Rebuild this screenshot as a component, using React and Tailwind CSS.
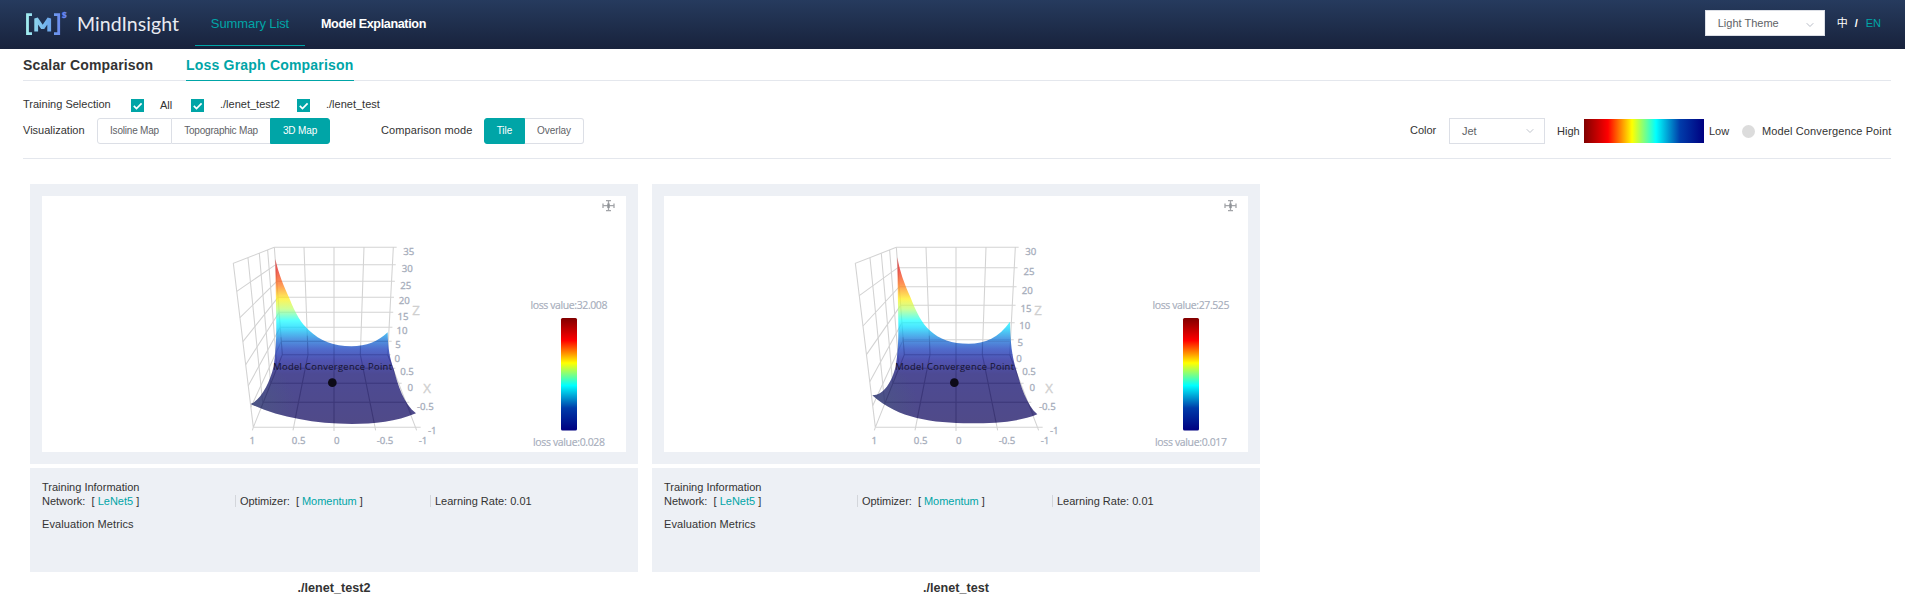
import React from "react";
import { ChevronDown } from "lucide-react";

const JET_STOPS = [
  ["0", "#800000"], ["0.2", "#ff0000"], ["0.4", "#ffff00"],
  ["0.6", "#00ffff"], ["0.8", "#003caa"], ["1", "#000080"],
];

const LEFT_WALL_7 = [187, 266, 338, 407, 470, 535];
const LEFT_WALL_6 = [200, 291, 377, 458, 530];

const RUNS = [
  {
    id: "a",
    name: "./lenet_test2",
    max: "32.008",
    min: "0.028",
    levels: [107, 157, 205, 250, 295, 337],
    outer: LEFT_WALL_7,
    zLabels: [["35", 566, 77], ["30", 562, 129], ["25", 557, 179], ["20", 553, 226], ["15", 549, 272], ["10", 546, 315], ["5", 534, 358], ["0", 532, 400]],
    surface:
      "M166 90 C176 136 192 172 208 208 C226 254 244 284 266 303 C300 336 342 352 394 352 C440 352 474 338 503 310 C504 360 510 390 521 420 C533 468 552 525 588 553 C530 578 462 585 396 585 C280 584 174 564 92 525 C124 512 150 460 161 412 C171 350 169 280 168 230 Z",
  },
  {
    id: "b",
    name: "./lenet_test",
    max: "27.525",
    min: "0.017",
    levels: [116, 173, 229, 281, 332],
    outer: LEFT_WALL_6,
    zLabels: [["30", 566, 77], ["25", 561, 137], ["20", 556, 194], ["15", 552, 250], ["10", 548, 301], ["5", 535, 351], ["0", 531, 400]],
    surface:
      "M166 85 C174 130 188 166 204 202 C224 252 240 284 262 303 C292 332 330 344 380 344 C430 344 470 326 504 278 C505 340 510 380 522 420 C536 470 554 528 586 556 C530 579 462 583 386 583 C270 582 170 570 91 499 C124 500 150 460 161 412 C172 350 169 280 168 230 Z",
  },
];

function Label({ x, y, children, size = 29, fill = "#a6adbb", length, bold = 0.9 }) {
  return (
    <text
      x={x}
      y={y}
      textAnchor="middle"
      fontSize={size}
      fill={fill}
      stroke={fill}
      strokeWidth={bold}
      textLength={length}
      fontFamily="'Open Sans', 'Noto Sans', sans-serif"
    >
      {children}
    </text>
  );
}

function SurfacePlot({ run }) {
  const edgeLeft = (y) => 163 + ((y - 55) / 322) * 24;
  const edgeRight = (y) => 520 - ((y - 55) / 322) * 17;
  const outerX = (y) => 40 + ((y - 103) / 492) * 60;
  return (
    <svg className="block h-[256px] w-[584px]" viewBox="42 197 584 256">
      <defs>
        <linearGradient id={`surf-${run.id}`} gradientUnits="userSpaceOnUse" x1="0" y1="85" x2="0" y2="585">
          <stop offset="0" stopColor="#d22020" />
          <stop offset="0.08" stopColor="#e81c10" />
          <stop offset="0.16" stopColor="#ff6810" />
          <stop offset="0.25" stopColor="#ffef10" />
          <stop offset="0.31" stopColor="#b8ff70" />
          <stop offset="0.38" stopColor="#10ffff" />
          <stop offset="0.42" stopColor="#00d8ff" />
          <stop offset="0.49" stopColor="#0870d8" />
          <stop offset="0.55" stopColor="#0830b8" />
          <stop offset="0.62" stopColor="#080c90" />
          <stop offset="0.7" stopColor="#040068" />
          <stop offset="1" stopColor="#080058" />
        </linearGradient>
        <radialGradient id={`corner-${run.id}`} gradientUnits="userSpaceOnUse" cx="95" cy="520" r="130">
          <stop offset="0" stopColor="#486878" stopOpacity="0.75" />
          <stop offset="1" stopColor="#486878" stopOpacity="0" />
        </radialGradient>
        <linearGradient id={`bar-${run.id}`} x1="0" y1="0" x2="0" y2="1">
          {JET_STOPS.map(([o, c]) => <stop key={o} offset={o} stopColor={c} />)}
        </linearGradient>
      </defs>

      <g transform="translate(220 230) scale(0.33333)">
        <g fill="none" stroke="#d3d3d3" strokeWidth="3.2">
          <path d="M163 55H530 M187 377H512 M163 55L187 377 M520 55L503 377 M252 55L264 377 M342 55V377 M432 55L421 377" />
          <path d="M163 55L40 103L100 595L187 377 M84 87L128 521 M118 74L152 463 M143 64L171 418" />
          <path d="M100 595H602 M503 377L590 604 M128 520H568 M152 463H545 M171 418H526" />
          <path d="M97 604L100 595 M219 604L264 377 M342 606V377 M467 604L421 377" />
          {run.levels.map((y, i) => (
            <path key={y} d={`M${outerX(run.outer[i])} ${run.outer[i]}L${edgeLeft(y)} ${y}H${edgeRight(y) + 10}`} />
          ))}
        </g>
        <path d={run.surface} fill={`url(#surf-${run.id})`} opacity="0.71" />
        <path d={run.surface} fill={`url(#corner-${run.id})`} opacity="0.5" />
        <clipPath id={`clip-${run.id}`}><path d={run.surface} /></clipPath>
        <g clipPath={`url(#clip-${run.id})`} fill="none" stroke="#15133f" strokeOpacity="0.13" strokeWidth="3.2">
          <path d="M187 377H503 M171 418H519 M152 463H537 M128 520H560 M187 377L100 595 M264 377L220 595 M342 377V595 M421 377L465 595 M503 377L590 595" />
          <path d={`M187 377L183 325 M264 377L262 320 M342 377V340 M421 377V340 M184 337H503`} />
        </g>
        <circle cx="337" cy="461" r="13" fill="#0d0b18" />
        <Label x={338} y={423} size={28} fill="#15132e" length={356} bold={0}>Model Convergence Point</Label>
        {run.zLabels.map(([t, x, y]) => <Label key={t} x={x} y={y}>{t}</Label>)}
        <Label x={561} y={437}>0.5</Label>
        <Label x={571} y={485}>0</Label>
        <Label x={616} y={542}>-0.5</Label>
        <Label x={637} y={616}>-1</Label>
        <Label x={97} y={645}>1</Label>
        <Label x={236} y={645}>0.5</Label>
        <Label x={350} y={645}>0</Label>
        <Label x={495} y={645}>-0.5</Label>
        <Label x={609} y={645}>-1</Label>
        <Label x={588} y={257} size={40} fill="#cfcfcf">Z</Label>
        <Label x={621} y={493} size={40} fill="#cfcfcf">X</Label>
      </g>

      <Label x={569} y={309.5} size={10.5} length={77} bold={0.15}>{`loss value:${run.max}`}</Label>
      <rect x="561" y="319" width="16" height="112.5" rx="1.5" fill={`url(#bar-${run.id})`} />
      <Label x={569} y={447} size={10.5} length={72} bold={0.15}>{`loss value:${run.min}`}</Label>
      <path
        d="M608.5 202V211.5 M603 206.7H614 M606 201.7H611 M606 211.7H611 M603 204.5V209 M614 204.5V209"
        stroke="#a3a5a9"
        strokeWidth="1.3"
        fill="none"
      />
      <path d="M607.3 204.5H609.7V209H607.3Z" fill="#8f9297" />
    </svg>
  );
}

function Bracketed({ label, value }) {
  return (
    <span className="whitespace-pre">
      {label}:{"  "}[ <span className="text-[#00a5a7]">{value}</span> ]
    </span>
  );
}

function RunCard({ run }) {
  return (
    <section className="w-[608px]">
      <div className="bg-[#edf0f5] p-3">
        <div className="h-[256px] bg-white">
          <SurfacePlot run={run} />
        </div>
      </div>
      <div className="mt-1 h-[104px] bg-[#edf0f5] px-3 pt-3 text-[11px] leading-[14px] text-[#333]">
        <div>Training Information</div>
        <div className="flex">
          <div className="w-[193px]"><Bracketed label="Network" value="LeNet5" /></div>
          <div className="my-px flex h-3 w-[195px] items-center border-l border-[#d3d6db] pl-1 tracking-[-0.03px]"><Bracketed label="Optimizer" value="Momentum" /></div>
          <div className="my-px flex h-3 items-center border-l border-[#d3d6db] pl-1">Learning Rate: 0.01</div>
        </div>
        <div className="mt-[9px] tracking-[0.1px]">Evaluation Metrics</div>
      </div>
      <div className="mt-2 text-center text-[12.6px] leading-4 font-bold text-[#333]">{run.name}</div>
    </section>
  );
}

function Check() {
  return (
    <span className="flex size-[13px] shrink-0 items-center justify-center bg-[#00a5a7]">
      <svg viewBox="0 0 13 13" className="size-[13px]">
        <path d="M2.8 6.8L5.5 9.5L10.6 4.3" fill="none" stroke="white" strokeWidth="1.7" />
      </svg>
    </span>
  );
}

function Logo() {
  return (
    <svg className="h-[49px] w-[160px] shrink-0" viewBox="25 0 160 49">
      <defs>
        <linearGradient id="logo" gradientUnits="userSpaceOnUse" x1="26" y1="0" x2="67" y2="0">
          <stop offset="0" stopColor="#a5f0f0" />
          <stop offset="0.5" stopColor="#6fb0ec" />
          <stop offset="1" stopColor="#6a78f0" />
        </linearGradient>
      </defs>
      <path d="M32 14.7H27.5V33.7H32 M54 14.7H58.7V33.7H54" fill="none" stroke="url(#logo)" strokeWidth="2.8" />
      <path d="M36.2 31.5V18.5L42.7 28L49.2 18.5V31.5" fill="none" stroke="url(#logo)" strokeWidth="3.8" strokeLinejoin="bevel" />
      <text x="62" y="18" fontSize="10.5" fontWeight="900" fill="#6a88f4" stroke="#6a88f4" strokeWidth="0.4" fontFamily="Lato, sans-serif">s</text>
      <text x="77" y="31" fontSize="19.5" fill="#e8ebf2" textLength="102" fontFamily="Lato, sans-serif">MindInsight</text>
    </svg>
  );
}

export default function App() {
  return (
    <div className="h-[608px] overflow-hidden bg-white font-['Liberation_Sans',Arial,'Noto_Sans_CJK_SC',sans-serif] text-[11px] text-[#333]">
      <header className="flex h-[49px] items-center bg-linear-to-b from-[#263b5e] to-[#18223c] pl-[25px] text-[13px]">
        <Logo />
        <nav className="ml-[10px] flex h-[49px]">
          <div className="flex h-[46px] w-[110px] items-center justify-center border-b border-[#00a5a7] pt-[3px] tracking-[-0.1px] text-[#00a5a7]">Summary List</div>
          <div className="ml-4 flex h-[46px] items-center pt-[3px] text-[12.6px] font-bold tracking-[-0.37px] text-white">Model Explanation</div>
        </nav>
        <div className="mr-6 ml-auto flex items-center text-[11px] leading-none">
          <div className="mt-[-3px] flex h-[26px] w-[120px] items-center justify-between border border-[#dcdfe6] bg-white pr-2 pl-3 text-[#606266]">
            Light Theme
            <ChevronDown className="mt-1 size-3 text-[#b8bcc6]" strokeWidth={2} />
          </div>
          <div className="mt-[-3px] ml-3 flex items-center text-white">
            <span className="w-[18px]">中</span>
            <span className="w-[11px] font-bold">/</span>
            <span className="text-[#00a5a7]">EN</span>
          </div>
        </div>
      </header>

      <div className="mr-[14px] ml-[23px]">
        <div className="flex h-[32px] gap-8 border-b border-[#e4e7ed] text-[14px] leading-[32px] font-bold">
          <div className="w-[131px] whitespace-nowrap tracking-[0.15px]">Scalar Comparison</div>
          <div className="h-[32px] w-[168px] border-b border-[#00a5a7] whitespace-nowrap tracking-[0.2px] text-[#00a5a7]">Loss Graph Comparison</div>
        </div>

        <div className="mt-[17px] flex h-[14px] items-center">
          <span className="mt-[-2px] w-[108px]">Training Selection</span>
          <Check />
          <span className="ml-4 w-[31px]">All</span>
          <Check />
          <span className="mt-[-2px] ml-4 w-[77px]">./lenet_test2</span>
          <Check />
          <span className="mt-[-2px] ml-4">./lenet_test</span>
        </div>

        <div className="mt-[6px] flex h-[41px] items-start border-b border-[#e4e7ed]">
          <div className="flex h-[26px] items-center">
            <span className="mt-[-1px] w-[74px]">Visualization</span>
            <div className="flex h-[26px] text-[10px] leading-[24px] text-[#606266]">
              <div className="w-[75px] rounded-l-[3px] border border-[#dcdfe6] text-center tracking-[-0.2px]">Isoline Map</div>
              <div className="w-[98px] border-y border-[#dcdfe6] text-center tracking-[-0.2px]">Topographic Map</div>
              <div className="w-[60px] rounded-r-[3px] border border-[#00a5a7] bg-[#00a5a7] text-center tracking-[-0.15px] text-white">3D Map</div>
            </div>
            <span className="mt-[-1px] ml-[51px] w-[103px] tracking-[0.1px]">Comparison mode</span>
            <div className="flex h-[26px] text-[10px] leading-[24px] text-[#606266]">
              <div className="w-[41px] rounded-l-[3px] border border-[#00a5a7] bg-[#00a5a7] text-center text-white">Tile</div>
              <div className="w-[59px] rounded-r-[3px] border border-l-0 border-[#dcdfe6] text-center tracking-[-0.1px]">Overlay</div>
            </div>
          </div>
          <div className="ml-auto flex h-[26px] items-center whitespace-nowrap">
            <span className="mt-[-1px] w-[39px]">Color</span>
            <div className="flex h-[26px] w-[96px] items-center justify-between border border-[#dcdfe6] pr-2 pl-3 text-[#606266]">
              Jet
              <ChevronDown className="size-3 text-[#c0c4cc]" strokeWidth={2} />
            </div>
            <span className="ml-3 w-[27px]">High</span>
            <div className="h-6 w-[120px] bg-[linear-gradient(to_right,#800000,#ff0000_20%,#ffff00_40%,#00ffff_60%,#003caa_80%,#000080)]" />
            <span className="ml-[5px] w-[33px]">Low</span>
            <span className="size-[13px] rounded-full bg-[#dcdcdc]" />
            <span className="ml-[7px] w-[129px] tracking-[0.12px]">Model Convergence Point</span>
          </div>
        </div>
      </div>

      <main className="mt-[25px] ml-[30px] flex gap-[14px]">
        {RUNS.map((run) => <RunCard key={run.id} run={run} />)}
      </main>
    </div>
  );
}
